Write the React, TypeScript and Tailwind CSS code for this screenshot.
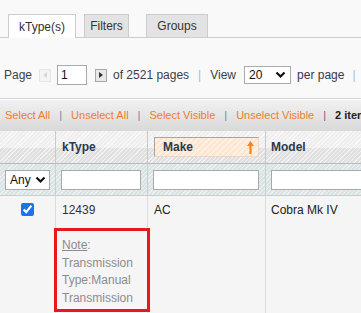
import React from 'react';

const hatchHeader =
  'bg-[repeating-linear-gradient(135deg,rgba(255,255,255,0.55)_0px,rgba(255,255,255,0.55)_1px,transparent_1px,transparent_3px),linear-gradient(#efefef_52%,#e0e0e0_52%)]';
const hatchFilter =
  'bg-[repeating-linear-gradient(135deg,rgba(255,255,255,0.45)_0px,rgba(255,255,255,0.45)_1px,transparent_1px,transparent_3px),linear-gradient(#dbe4e4,#dbe4e4)]';

const Chevron = () => (
  <svg width="11" height="8" viewBox="0 0 11 8" className="shrink-0">
    <path d="M1.5 1.5 L5.5 5.5 L9.5 1.5" fill="none" stroke="#111" strokeWidth="2.2" />
  </svg>
);

const Sep = ({ color = '#8899aa', gap = 'mx-[9px]' }: { color?: string; gap?: string }) => (
  <span className={`${gap} shrink-0`} style={{ color }}>|</span>
);

export default function App() {
  return (
    <div className="relative w-[361px] h-[313px] overflow-hidden bg-[#f9f9f9] text-[12px] text-[#333] font-['Liberation_Sans',Arial,sans-serif]">
      {/* Tabs */}
      <div className="flex items-end h-[38px] pl-[8px] border-b border-[#cccccc]">
        <div className="w-[68px] h-[24px] -mb-px bg-white border border-b-0 border-[#cccccc] flex items-center justify-center text-[#333]">
          kType(s)
        </div>
        <div className="ml-[8px] w-[45px] h-[23px] bg-[#e3e3e3] border border-b-0 border-[#cccccc] flex items-center justify-center text-[#333]">
          Filters
        </div>
        <div className="ml-[17px] w-[62px] h-[23px] bg-[#e3e3e3] border border-b-0 border-[#cccccc] flex items-center justify-center text-[#333]">
          Groups
        </div>
      </div>

      {/* Pager */}
      <div className="h-[61px] flex items-center pl-[4px] pt-[14px] whitespace-nowrap border-b border-[#d4d4d4]">
        <span className="shrink-0 text-[#3a3f4a]">Page</span>
        <div className="shrink-0 ml-[7px] w-[12px] h-[13px] border border-[#e6e6e6] bg-[#f4f4f4] flex items-center justify-center">
          <svg width="4" height="6" viewBox="0 0 4 6"><path d="M4 0 L0 3 L4 6 Z" fill="#d6d6d6" /></svg>
        </div>
        <div className="shrink-0 ml-[6px] w-[30px] h-[20px] border border-[#aaaaaa] bg-white pl-[3px] flex items-center text-[#111]">1</div>
        <div className="shrink-0 ml-[8px] w-[12px] h-[13px] border border-[#a8a8a8] bg-[#e8e8e8] flex items-center justify-center">
          <svg width="4" height="6" viewBox="0 0 4 6"><path d="M0 0 L4 3 L0 6 Z" fill="#333" /></svg>
        </div>
        <span className="shrink-0 ml-[6px] text-[#3a3f4a]">of 2521 pages</span>
        <Sep color="#a9bccb" gap="mx-[9px]" />
        <span className="shrink-0 text-[#3a3f4a]">View</span>
        <div className="shrink-0 ml-[8px] w-[47px] h-[18px] border border-[#aaaaaa] bg-white flex items-center justify-between pl-[4px] pr-[4px] text-[#111]">
          <span>20</span>
          <Chevron />
        </div>
        <span className="shrink-0 ml-[6px] text-[#3a3550]">per page</span>
        <Sep color="#a9bccb" gap="mx-[8px]" />
      </div>

      {/* Mass action bar */}
      <div className="h-[32px] flex items-center pl-[5px] whitespace-nowrap text-[11px] bg-[linear-gradient(#f1f1f1,#d9d9d9)] border-t border-[#ffffff]">
        <span className="shrink-0 text-[#f07c2a]">Select All</span>
        <Sep color="#6f86a6" />
        <span className="shrink-0 text-[#f07c2a]">Unselect All</span>
        <Sep color="#6f86a6" />
        <span className="shrink-0 text-[#f07c2a]">Select Visible</span>
        <Sep color="#6f86a6" />
        <span className="shrink-0 text-[#f07c2a]">Unselect Visible</span>
        <Sep color="#7a5c7a" />
        <span className="shrink-0 font-bold text-[#222]">2 items</span>
      </div>

      {/* Grid */}
      <div className="grid grid-cols-[56px_92px_118px_1fr]">
        {/* Header */}
        <div className={`h-[33px] border-r border-b border-[#c9c9c9] border-b-[#b5bcbc] ${hatchHeader}`} />
        <div className={`h-[33px] border-r border-b border-[#c9c9c9] border-b-[#b5bcbc] pl-[6px] flex items-center font-bold text-[#2c3a4c] ${hatchHeader}`}>
          kType
        </div>
        <div className={`h-[33px] border-r border-b border-[#c9c9c9] border-b-[#b5bcbc] pl-[6px] pr-[6px] pt-[6px] ${hatchHeader}`}>
          <div className="h-[20px] flex items-center justify-between pl-[8px] pr-[4px] border border-[#a5a5a5] border-r-[#e8d8c8] border-b-[#e8d8c8] bg-[repeating-linear-gradient(135deg,#fde6d0_0px,#fde6d0_2px,#fff0e2_2px,#fff0e2_4px)] font-bold text-[#2c3a4c]">
            <span>Make</span>
            <svg width="7" height="13" viewBox="0 0 7 13">
              <path d="M3.5 0 L7 5 L4.6 5 L4.6 13 L2.4 13 L2.4 5 L0 5 Z" fill="#f7841f" />
            </svg>
          </div>
        </div>
        <div className={`h-[33px] border-b border-[#b5bcbc] pl-[5px] flex items-center font-bold text-[#2c3a4c] ${hatchHeader}`}>
          Model
        </div>

        {/* Filter row */}
        <div className={`h-[32px] border-r border-b border-[#c9d0d0] flex items-center pl-[5px] ${hatchFilter}`}>
          <div className="w-[45px] h-[20px] bg-white border border-[#a9a9a9] flex items-center justify-between pl-[4px] pr-[3px] text-[#111]">
            <span>Any</span>
            <Chevron />
          </div>
        </div>
        <div className={`h-[32px] border-r border-b border-[#c9d0d0] flex items-center pl-[5px] pr-[6px] ${hatchFilter}`}>
          <div className="w-full h-[20px] bg-white border border-[#a9a9a9]" />
        </div>
        <div className={`h-[32px] border-r border-b border-[#c9d0d0] flex items-center pl-[5px] pr-[6px] ${hatchFilter}`}>
          <div className="w-full h-[20px] bg-white border border-[#a9a9a9]" />
        </div>
        <div className={`h-[32px] border-b border-[#c9d0d0] flex items-center pl-[5px] ${hatchFilter}`}>
          <div className="w-full h-[20px] bg-white border border-[#a9a9a9] border-r-0" />
        </div>

        {/* Data row */}
        <div className="h-[120px] bg-[#f5f5f5] border-r border-[#dcdcdc] flex justify-center pt-[7px]">
          <input type="checkbox" defaultChecked className="w-[13px] h-[13px] m-0 accent-[#1a73e8]" />
        </div>
        <div className="bg-[#f5f5f5] border-r border-[#dcdcdc] pl-[6px] pt-[5px] leading-[18px] text-[#3a2f3f]">
          <div>12439</div>
          <div className="mt-[18px] leading-[17.7px] text-[#8c8c8c]">
            <span className="underline">Note</span>:
            <div>Transmission</div>
            <div>Type:Manual</div>
            <div>Transmission</div>
          </div>
        </div>
        <div className="bg-[#f5f5f5] border-r border-[#dcdcdc] pl-[6px] pt-[5px] leading-[18px] text-[#222]">AC</div>
        <div className="bg-[#f5f5f5] pl-[5px] pt-[5px] leading-[18px] text-[#222]">Cobra Mk IV</div>
      </div>

      {/* Annotation box */}
      <div className="absolute left-[54px] top-[228px] w-[96px] h-[84px] border-[3px] border-[#e8161f]" />
    </div>
  );
}
